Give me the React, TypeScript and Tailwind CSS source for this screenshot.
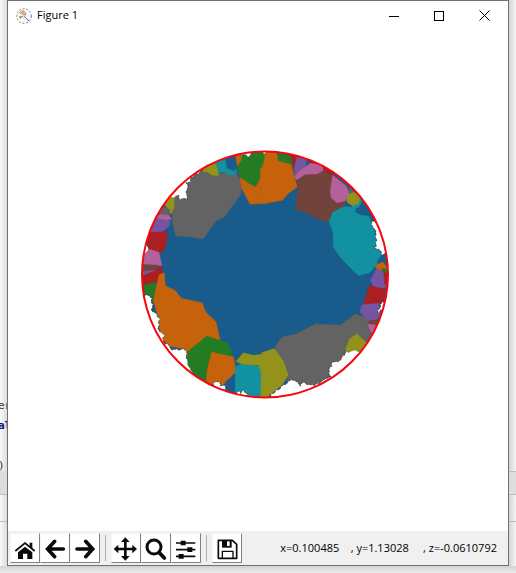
import React from "react";

type Region = { fill: string; points: string };

const BLUE = "#195b8a";
const ORANGE = "#c5620b";
const GREEN = "#237b23";
const GRAY = "#636363";
const OLIVE = "#93931c";
const TEAL = "#1292a1";
const RED = "#ab1e22";
const PURPLE = "#7654a0";
const PINK = "#b4609b";
const BROWN = "#70443c";
const WHITE = "#ffffff";

const upperLeft: Region[] = [
  { fill: GRAY, points: "110,160 130,150 155,155 160,95 205,75 260,85 300,80 320,110 318,148 268,216 242,228 205,282 165,276 122,273 113,235" },
  { fill: WHITE, points: "80,150 210,60 205,74 194,76 190,86 180,86 176,97 168,95 167,110 156,113 156,160 135,164 131,153 119,153 115,161 100,160" },
  { fill: OLIVE, points: "203,72 238,50 250,68 250,93 230,90 218,82 205,80" },
  { fill: TEAL, points: "240,45 278,28 305,75 303,86 285,91 268,82 251,82" },
  { fill: BLUE, points: "270,30 302,25 307,60 298,78 276,69" },
  { fill: ORANGE, points: "300,22 400,0 400,175 345,178 320,130 315,95 306,60" },
  { fill: GREEN, points: "320,20 386,10 390,40 380,65 383,85 362,125 342,115 316,97 306,65 320,45" },
  { fill: WHITE, points: "318,18 346,12 346,26 341,36 334,35 329,28 319,32" },
  { fill: OLIVE, points: "85,175 104,156 118,158 117,190 108,208 98,190" },
  { fill: GRAY, points: "70,195 92,186 105,194 104,212 80,216" },
  { fill: PINK, points: "62,208 100,210 110,222 88,228 65,224" },
  { fill: PURPLE, points: "50,228 65,221 106,227 105,241 78,264 46,260" },
  { fill: RED, points: "36,262 97,260 95,290 84,323 72,322 40,312" },
  { fill: WHITE, points: "27,300 40,305 39,322 30,331 25,328" },
  { fill: PINK, points: "24,330 45,313 72,322 81,362 58,360 22,357" },
  { fill: BROWN, points: "18,360 60,360 78,370 40,379 18,377" },
  { fill: RED, points: "18,377 40,379 80,366 83,385 80,410 18,410" },
  { fill: ORANGE, points: "78,386 88,384 90,415 78,410" },
];

const upperRight: Region[] = [
  { fill: ORANGE, points: "8,10 40,10 50,45 88,58 96,90 106,126 78,146 62,166 30,172 -5,175 -5,70 5,65 8,40" },
  { fill: WHITE, points: "0,20 14,20 10,26 2,27" },
  { fill: GREEN, points: "50,22 88,35 98,60 96,82 88,56 70,53 48,46" },
  { fill: RED, points: "86,30 108,34 98,55 100,95" },
  { fill: PURPLE, points: "105,35 135,38 130,70 98,92 96,70" },
  { fill: RED, points: "132,40 170,54 215,90 260,130 240,145 190,80 150,58" },
  { fill: BROWN, points: "104,105 130,85 180,76 215,95 212,165 255,172 235,195 210,205 202,230 175,225 125,200 103,195 103,160 108,130" },
  { fill: PINK, points: "98,93 112,78 145,55 180,60 184,76 165,87 130,88 103,105" },
  { fill: PINK, points: "212,90 252,122 262,145 250,168 225,173 207,158 205,135" },
  { fill: GRAY, points: "260,125 284,145 265,150" },
  { fill: TEAL, points: "275,145 300,165 292,188 270,190" },
  { fill: TEAL, points: "201,230 212,202 248,184 278,188 295,208 322,214 335,250 342,280 340,310 362,325 343,360 324,382 290,392 268,372 236,338 214,306 213,260" },
  { fill: OLIVE, points: "256,149 276,142 294,150 290,177 270,182 254,170" },
  { fill: BLUE, points: "278,200 300,178 330,195 345,225 322,210 300,211" },
  { fill: WHITE, points: "329,228 352,238 374,290 374,318 359,330 352,314 341,310 343,268 334,248" },
  { fill: BLUE, points: "345,350 358,332 380,335 376,355" },
  { fill: ORANGE, points: "340,361 362,351 378,370 358,382 344,375" },
  { fill: GREEN, points: "361,379 380,370 380,395 360,395" },
  { fill: PURPLE, points: "340,376 355,380 360,394 335,394" },
];

const lowerLeft: Region[] = [
  { fill: BROWN, points: "16,0 45,0 40,5 16,8" },
  { fill: PURPLE, points: "18,5 40,2 65,0 25,17" },
  { fill: RED, points: "20,18 82,-4 79,30 22,48" },
  { fill: GREEN, points: "23,46 65,38 65,60 56,91 28,80" },
  { fill: ORANGE, points: "72,14 86,8 92,48 120,61 139,85 202,98 212,126 243,155 256,212 220,203 185,230 158,260 150,237 105,229 76,203 70,140 55,93 63,55" },
  { fill: WHITE, points: "26,77 46,78 51,96 51,120 75,146 68,174 87,196 83,212 110,237 125,240 150,237 160,278 177,315 100,260 50,185" },
  { fill: GREEN, points: "158,245 215,198 280,220 293,260 230,248 215,300 214,338 175,310 158,284" },
  { fill: ORANGE, points: "230,246 295,260 306,308 268,344 213,340 216,300" },
  { fill: BLUE, points: "302,308 302,366 264,354 272,335" },
  { fill: OLIVE, points: "303,274 325,248 355,256 400,250 400,390 375,386 370,285 335,290" },
  { fill: TEAL, points: "301,290 315,283 370,288 378,310 376,390 300,374" },
  { fill: WHITE, points: "234,348 242,333 253,337 257,344 268,347 273,361 249,359" },
  { fill: WHITE, points: "304,367 312,364 315,370 324,360 337,370 330,379 306,374" },
];

const lowerRight: Region[] = [
  { fill: OLIVE, points: "-1,248 38,235 65,273 80,315 60,345 25,374 -1,390" },
  { fill: GRAY, points: "37,235 60,200 100,193 160,162 235,165 280,132 320,145 328,200 295,240 250,260 215,305 170,345 70,350 80,315 65,270" },
  { fill: WHITE, points: "25,378 42,362 60,350 78,335 98,330 113,346 127,338 150,347 165,342 180,337 195,322 207,320 200,302 210,280 238,268 252,246 280,240 305,244 230,330 130,377 45,390" },
  { fill: OLIVE, points: "250,238 263,206 285,191 310,215 318,222 300,248 280,240 258,246" },
  { fill: TEAL, points: "275,0 330,-6 320,9 302,13" },
  { fill: PURPLE, points: "325,30 345,-5 376,15 374,50 355,58 334,48" },
  { fill: RED, points: "365,2 379,10 378,52 368,42" },
  { fill: RED, points: "320,48 345,52 372,58 360,105 338,100 302,108 315,70" },
  { fill: GREEN, points: "358,-4 379,-4 379,8 366,8" },
  { fill: PURPLE, points: "293,125 300,104 350,100 355,130 345,150 320,153" },
  { fill: BROWN, points: "318,153 348,148 345,166 319,160" },
  { fill: PINK, points: "318,162 342,165 336,190 325,185" },
  { fill: GRAY, points: "320,190 335,190 320,212" },
  { fill: WHITE, points: "362,95 370,98 352,132 346,119 355,113" },
];

// Breaks each edge into short steps so that open areas get a ragged coastline.
function ragged(points: string): string {
  const corners = points.split(" ").map((p) => p.split(",").map(Number));
  const offsets = [0, 3, -2, 2, -3, 3, 1, -3];
  const out: string[] = [];
  let n = 0;
  corners.forEach(([x, y], i) => {
    const [nx, ny] = corners[(i + 1) % corners.length];
    const length = Math.hypot(nx - x, ny - y);
    const steps = Math.max(1, Math.round(length / 9));
    for (let s = 0; s < steps; s++) {
      const t = s / steps;
      const d = offsets[n++ % offsets.length];
      const px = x + (nx - x) * t + ((ny - y) / length) * d;
      const py = y + (ny - y) * t - ((nx - x) / length) * d;
      out.push(`${px.toFixed(1)},${py.toFixed(1)}`);
    }
  });
  return out.join(" ");
}

const Regions = ({ list }: { list: Region[] }) => (
  <>
    {list.map((r, i) => {
      const open = r.fill === WHITE;
      return (
        <polygon
          key={i}
          points={open ? ragged(r.points) : r.points}
          fill={r.fill}
          stroke={open ? "#222222" : r.fill}
          strokeWidth={open ? 2 : 1}
          strokeDasharray={open ? "6 4" : undefined}
        />
      );
    })}
  </>
);

const Plot = () => (
  <svg className="h-[250px] w-[250px]" viewBox="140 150 250 250" role="img" aria-label="Tiled disc">
    <defs>
      <clipPath id="disc">
        <circle cx="265" cy="274.5" r="123" />
      </clipPath>
    </defs>
    <g clipPath="url(#disc)">
      <circle cx="265" cy="274.5" r="123" fill={BLUE} />
      <g transform="translate(135 145) scale(0.33333)"><Regions list={upperLeft} /></g>
      <g transform="translate(262 145) scale(0.33333)"><Regions list={upperRight} /></g>
      <g transform="translate(135 270) scale(0.33333)"><Regions list={lowerLeft} /></g>
      <g transform="translate(262 270) scale(0.33333)"><Regions list={lowerRight} /></g>
    </g>
    <circle cx="265" cy="274.5" r="123" fill="none" stroke="#f5080c" strokeWidth="2" />
  </svg>
);

const ToolButton = ({ label, viewBox, children }: { label: string; viewBox: string; children: React.ReactNode }) => (
  <button
    type="button"
    aria-label={label}
    className="h-[30px] w-[30px] shrink-0 border border-t-[#f7f7f7] border-r-[#808080] border-b-[#808080] border-l-[#f7f7f7] bg-white"
  >
    <svg className="block h-7 w-7" viewBox={viewBox} fill="#0a0a0a" stroke="none">
      {children}
    </svg>
  </button>
);

const Separator = () => <div className="mx-[5px] h-[26px] w-px shrink-0 bg-[#b0b0b0]" />;

export default function App() {
  return (
    <div className="grid min-h-screen grid-cols-[7px_minmax(0,1fr)_7px] grid-rows-[1fr_7px] bg-[#e4e4e4] font-['Open_Sans','Noto_Sans',sans-serif] text-[11px] text-black">
      <div className="flex flex-col overflow-hidden bg-linear-to-r from-[#fafafa] to-[#dcdcdc] font-['DejaVu_Sans_Mono',monospace]">
        <div className="flex h-[471px] flex-col pt-[396px] leading-5">
          <span className="-ml-0.5 text-[#333333]">er</span>
          <span className="-ml-0.5 font-bold text-[#101080]">al</span>
          <span className="h-5 shrink-0" />
          <span className="-ml-0.5 text-[#333333]">)</span>
        </div>
        <div className="h-6 border-b border-[#bdbdbd] bg-[#dddddd]" />
        <div className="h-[27px] border-b border-[#bdbdbd]" />
      </div>

      <main className="flex flex-col border border-[#707070] bg-white">
        <header className="flex h-[29px] items-center pr-[18px] pl-2">
          <svg className="mr-[5px] h-4 w-4" viewBox="0 0 48 48" aria-hidden="true">
            <circle cx="24" cy="24" r="22" fill="#fbfbfb" stroke="#64849c" strokeWidth="3" strokeDasharray="6 5" />
            <path d="M24 24 8 14 20 5 28 11Z" fill="#e2ac63" />
            <path d="M24 24 12 33 8 25Z" fill="#b98957" />
            <path d="M24 24 39 39 30 31Z" fill="#315f82" stroke="#315f82" strokeWidth="3" />
            <path d="M24 24 31 20 29 12Z" fill="#6e8fa1" />
            <path d="M24 5V43M5 24H43M11 11 37 37" stroke="#c9d0d4" strokeWidth="1" />
          </svg>
          <h1 className="flex-1">Figure 1</h1>
          <div className="flex gap-[35px]">
            <button type="button" aria-label="Minimize">
              <svg className="h-[10px] w-[10px]" viewBox="0 0 10 10"><path d="M0 5.5H10" stroke="#000" /></svg>
            </button>
            <button type="button" aria-label="Maximize">
              <svg className="h-[10px] w-[10px]" viewBox="0 0 10 10"><rect x=".5" y=".5" width="9" height="9" fill="none" stroke="#000" /></svg>
            </button>
            <button type="button" aria-label="Close">
              <svg className="h-[11px] w-[11px]" viewBox="0 0 11 11"><path d="m.5.5 10 10m0-10-10 10" stroke="#000" /></svg>
            </button>
          </div>
        </header>

        <section className="flex flex-1 items-center justify-center pb-3 pl-[14px]">
          <Plot />
        </section>

        <footer className="flex h-[34px] items-center bg-[#f0f0f0] pl-0.5">
          <ToolButton label="Home" viewBox="33 26 84 84">
            <path d="m46 77 29-24 29 24" fill="none" stroke="#0a0a0a" strokeWidth="5" />
            <path d="M89 52h8v20l-8-7ZM54 81l21-17 22 17v20H82V85H69v16H54Z" />
          </ToolButton>
          <ToolButton label="Back" viewBox="123 26 84 84">
            <path d="m164 48-21 23 21 23M144 71h46" fill="none" stroke="#0a0a0a" strokeWidth="11" strokeLinecap="round" />
          </ToolButton>
          <ToolButton label="Forward" viewBox="213 26 84 84">
            <path d="m257 48 21 23-21 23M277 71h-46" fill="none" stroke="#0a0a0a" strokeWidth="11" strokeLinecap="round" />
          </ToolButton>
          <Separator />
          <ToolButton label="Pan" viewBox="8 26 84 84">
            <path d="M48 44v54M21 71h54" stroke="#0a0a0a" strokeWidth="8" />
            <path d="m48 36 13 14H35ZM48 106 35 92h26ZM13 71l14-13v26ZM83 71 69 84V58Z" />
          </ToolButton>
          <ToolButton label="Zoom" viewBox="98 26 84 84">
            <circle cx="134" cy="65" r="21" fill="none" stroke="#0a0a0a" strokeWidth="9" />
            <path d="m150 82 15 16" stroke="#0a0a0a" strokeWidth="11" strokeLinecap="round" />
          </ToolButton>
          <ToolButton label="Configure subplots" viewBox="188 26 84 84">
            <path d="M200 53h58M200 73h58M200 93h58" stroke="#0a0a0a" strokeWidth="5" />
            <path d="M214 46h15v14h-15ZM234 66h15v14h-15ZM208 86h15v14h-15Z" />
          </ToolButton>
          <Separator />
          <ToolButton label="Save" viewBox="308 26 84 84">
            <path d="M324 45h42l13 12v42h-55Z" fill="none" stroke="#0a0a0a" strokeWidth="5" strokeLinejoin="round" />
            <path d="M335 45h29v22h-29Z" />
            <path d="M350 48h8v14h-8Z" fill="#ffffff" />
            <path d="M336 98V78h32v20" fill="none" stroke="#0a0a0a" strokeWidth="4" />
          </ToolButton>
          <output className="flex-1 pr-[11px] text-right whitespace-pre">x=0.100485    , y=1.13028     , z=-0.0610792</output>
        </footer>
      </main>

      <div className="flex flex-col bg-linear-to-r from-[#d4d4d4] to-[#f5f5f5]">
        <div className="h-[472px] border-b border-[#bdbdbd]" />
        <div className="h-[23px] border-b border-[#bdbdbd] bg-[#dddddd]" />
        <div className="h-[27px] border-b border-[#bdbdbd]" />
      </div>
      <div className="col-span-3 bg-linear-to-b from-[#d2d2d2] to-[#ececec]" />
    </div>
  );
}
